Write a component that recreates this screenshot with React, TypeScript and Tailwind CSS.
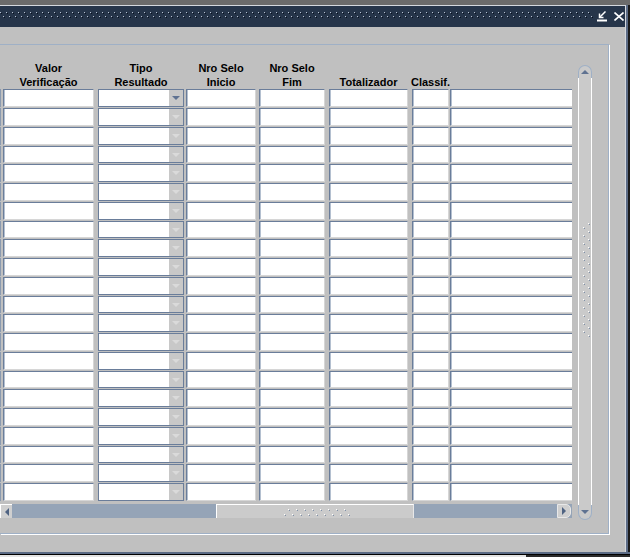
import React from "react";

type Col = { cls: string; kind: "edge" | "text" | "combo" | "open"; title?: string[] };

// column widths and gaps taken from the form grid
const cols: Col[] = [
    { cls: "w-[1px]", kind: "edge" },
    { cls: "ml-[2px] w-[91px]", kind: "text", title: ["Valor", "Verificação"] },
    { cls: "ml-[4px] w-[86px]", kind: "combo", title: ["Tipo", "Resultado"] },
    { cls: "ml-[2px] w-[70px]", kind: "text", title: ["Nro Selo", "Inicio"] },
    { cls: "ml-[3px] w-[66px]", kind: "text", title: ["Nro Selo", "Fim"] },
    { cls: "ml-[4px] w-[79px]", kind: "text", title: ["Totalizador"] },
    { cls: "ml-[4px] w-[37px]", kind: "text", title: ["Classif."] },
    { cls: "ml-[1px] w-[122px]", kind: "open" },
];

const rowHeights = Array.from({ length: 22 }, (_, i) =>
    i % 4 === 3 ? "h-[18px]" : "h-[19px]"
);

const TitlePattern = () => (
    <svg width="593" height="8" className="mt-[6px] shrink-0">
        <defs>
            <pattern id="tp" width="6" height="8" patternUnits="userSpaceOnUse">
                <rect x="0" y="0" width="1" height="1" fill="#b9c3d2" />
                <rect x="1" y="1" width="1" height="1" fill="#0a1220" />
                <rect x="3" y="4" width="1" height="1" fill="#b9c3d2" />
                <rect x="4" y="5" width="1" height="1" fill="#0a1220" />
            </pattern>
        </defs>
        <rect width="593" height="8" fill="url(#tp)" />
    </svg>
);

const Grip = ({ w, h, dots }: { w: number; h: number; dots: [number, number][] }) => (
    <svg width={w} height={h} className="shrink-0">
        {dots.map(([x, y], i) => (
            <g key={i}>
                <rect x={x} y={y} width="1" height="1" fill="#ffffff" />
                <rect x={x + 1} y={y + 1} width="1" height="1" fill="#7f90a8" />
            </g>
        ))}
    </svg>
);

const vDots: [number, number][] = [
    ...Array.from({ length: 14 }, (_, i) => [1, 5 + 8 * i] as [number, number]),
    ...Array.from({ length: 15 }, (_, i) => [6, 1 + 8 * i] as [number, number]),
];
const hDots: [number, number][] = [
    ...Array.from({ length: 8 }, (_, i) => [5 + 8 * i, 1] as [number, number]),
    ...Array.from({ length: 9 }, (_, i) => [1 + 8 * i, 6] as [number, number]),
];

const Cell = ({ col, first }: { col: Col; first: boolean }) => {
    if (col.kind === "edge") {
        return <div className={`${col.cls} bg-[#8a9ab0]`} />;
    }
    if (col.kind === "combo") {
        return (
            <div className={`${col.cls} flex justify-end bg-white border border-[#6a7d9a]`}>
                <div className="w-[14px] bg-[#c8c8c8] flex items-center justify-center">
                    <div
                        className={`w-0 h-0 border-x-[4px] border-x-transparent border-t-[4px] ${
                            first ? "border-t-[#5f7291]" : "border-t-[#dadada]"
                        }`}
                    />
                </div>
            </div>
        );
    }
    return (
        <div
            className={`${col.cls} bg-white border-t border-l border-t-[#6a7d9a] border-l-[#6a7d9a] shadow-[inset_1px_0_0_#b4c0d0] border-b border-b-[#d6d6d6] ${
                col.kind === "open" ? "" : "border-r border-r-[#d6d6d6]"
            }`}
        />
    );
};

export default function App() {
    return (
        <div className="w-[630px] h-[557px] flex flex-col bg-[#6b6b6b] overflow-hidden font-['Liberation_Sans',Arial,sans-serif]">
            <div className="h-[5px] shrink-0" />

            <div className="flex shrink-0 h-[547px]">
                <div className="w-[625px] flex flex-col">
                    <div className="h-[1px] bg-[#d4d8de]" />

                    {/* Title bar */}
                    <div className="h-[21px] bg-[#26354a] flex items-start">
                        <TitlePattern />
                        <svg width="11" height="11" className="ml-[4px] mt-[5px]" fill="none" stroke="#ffffff">
                            <path d="M8.5 0.5 L2.5 6.5" strokeWidth="1.5" />
                            <path d="M2.5 2.5 V6.5 H6.5" strokeWidth="1.5" />
                            <path d="M0 9.5 H10" strokeWidth="2" />
                        </svg>
                        <svg width="10" height="9" className="ml-[6px] mt-[6px]" fill="none" stroke="#ffffff" strokeWidth="1.6">
                            <path d="M0.5 0.5 L9.5 8.5 M9.5 0.5 L0.5 8.5" />
                        </svg>
                    </div>

                    {/* Body */}
                    <div className="flex-1 bg-[#c0c0c0] pt-[17px] pr-[16px] pb-[18px]">
                        <div className="h-[490px] w-[609px] flex border-t border-r border-b border-[#9fb0c6] shadow-[1px_1px_0_#ffffff]">
                            <div className="w-[572px] flex flex-col">
                                {/* Header */}
                                <div className="h-[44px] flex text-[11px] leading-[14px] font-bold text-black">
                                    {cols.map((c, i) => (
                                        <div key={i} className={`${c.cls} flex flex-col justify-end items-center text-center whitespace-nowrap`}>
                                            {c.title?.map((t) => (
                                                <span key={t}>{t}</span>
                                            ))}
                                        </div>
                                    ))}
                                </div>

                                {/* Rows */}
                                {rowHeights.map((h, r) => (
                                    <div key={r} className={`${h} flex pb-[1px]`}>
                                        {cols.map((c, i) => (
                                            <Cell key={i} col={c} first={r === 0} />
                                        ))}
                                    </div>
                                ))}

                                {/* Horizontal scrollbar */}
                                <div className="mt-[2px] h-[14px] flex bg-[#95a4b7]">
                                    <div className="w-[12px] bg-[#cfcfcf] border-t border-l border-white flex items-center justify-center">
                                        <div className="w-0 h-0 border-y-[4px] border-y-transparent border-r-[4px] border-r-[#4f6382]" />
                                    </div>
                                    <div className="ml-[204px] w-[198px] bg-[#cbcbcb] border-t border-l border-white border-r border-r-[#e8e8e8] flex pl-[66px] pt-[3px]">
                                        <Grip w={68} h={8} dots={hDots} />
                                    </div>
                                    <div className="ml-auto mr-[1px] w-[14px] bg-[#cfcfcf] border border-[#e8e8e8] rounded-r-[5px] flex items-center justify-center">
                                        <div className="w-0 h-0 border-y-[4px] border-y-transparent border-l-[4px] border-l-[#4f6382]" />
                                    </div>
                                </div>
                            </div>

                            {/* Vertical scrollbar */}
                            <div className="ml-[6px] w-[14px] pt-[20px] flex flex-col">
                                <div className="h-[13px] bg-[#cacaca] border border-b-0 border-[#9fb0c6] rounded-t-[7px] flex items-center justify-center">
                                    <div className="w-0 h-0 border-x-[4px] border-x-transparent border-b-[4px] border-b-[#5f7291]" />
                                </div>
                                <div className="h-[427px] bg-[#cacaca] border-x border-white pt-[144px] pl-[3px]">
                                    <Grip w={9} h={116} dots={vDots} />
                                </div>
                                <div className="h-[15px] bg-[#cacaca] border border-t-0 border-[#9fb0c6] rounded-b-[7px] flex items-center justify-center">
                                    <div className="w-0 h-0 border-x-[4px] border-x-transparent border-t-[4px] border-t-[#5f7291]" />
                                </div>
                            </div>
                        </div>
                    </div>
                </div>
                <div className="w-[1px] bg-[#d4d8de]" />
                <div className="w-[2px] bg-[#5b6b85]" />
                <div className="w-[2px] bg-[#1a1a1a]" />
            </div>

            <div className="h-[2px] shrink-0 bg-[#5b6b85]" />
            <div className="h-[1px] shrink-0 bg-black" />
            <div className="flex-1 flex">
                <div className="w-[526px] bg-[#e4e4e4]" />
                <div className="flex-1 bg-[#2a2a2a]" />
            </div>
        </div>
    );
}
